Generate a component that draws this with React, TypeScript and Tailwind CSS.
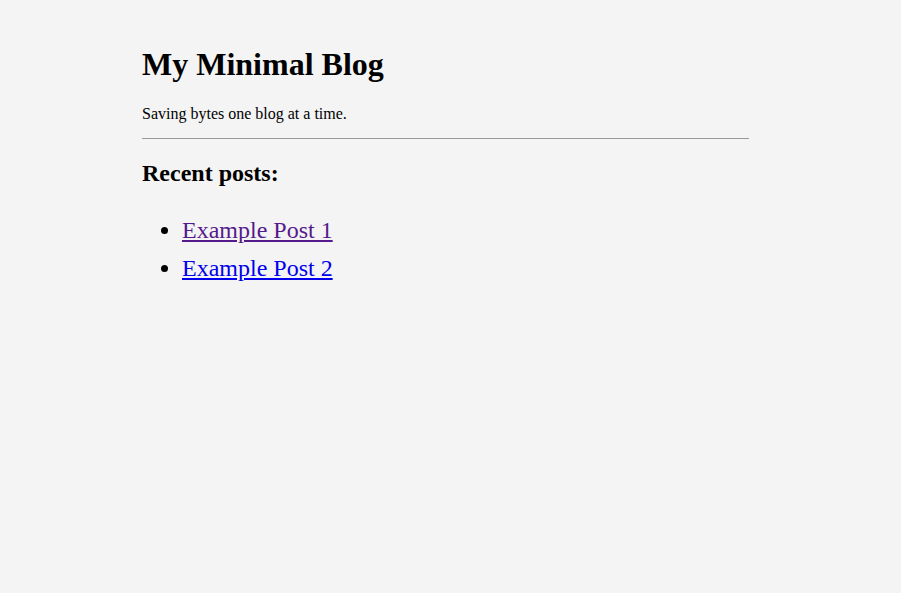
export default function App() {
  return (
    <div className="min-h-[593px] bg-[#f4f4f4] text-black" style={{ fontFamily: '"Liberation Serif", "Times New Roman", serif' }}>
      <div className="ml-[142px] w-[607px] pt-[46px]">
        <h1 className="text-[32px] font-bold leading-[37px]">My Minimal Blog</h1>
        <p className="mt-[22px] text-[16px] leading-[18px]">Saving bytes one blog at a time.</p>
        <hr className="mt-[15px] border-t border-[#999]" />
        <h2 className="mt-[20px] text-[24px] font-bold leading-[28px]">Recent posts:</h2>
        <ul className="mt-[24px] list-disc pl-[40px] text-[24px] leading-[38px]">
          <li>
            <a href="#" className="text-[#551a8b] underline">Example Post 1</a>
          </li>
          <li>
            <a href="#" className="text-[#0000ee] underline">Example Post 2</a>
          </li>
        </ul>
      </div>
    </div>
  );
}
